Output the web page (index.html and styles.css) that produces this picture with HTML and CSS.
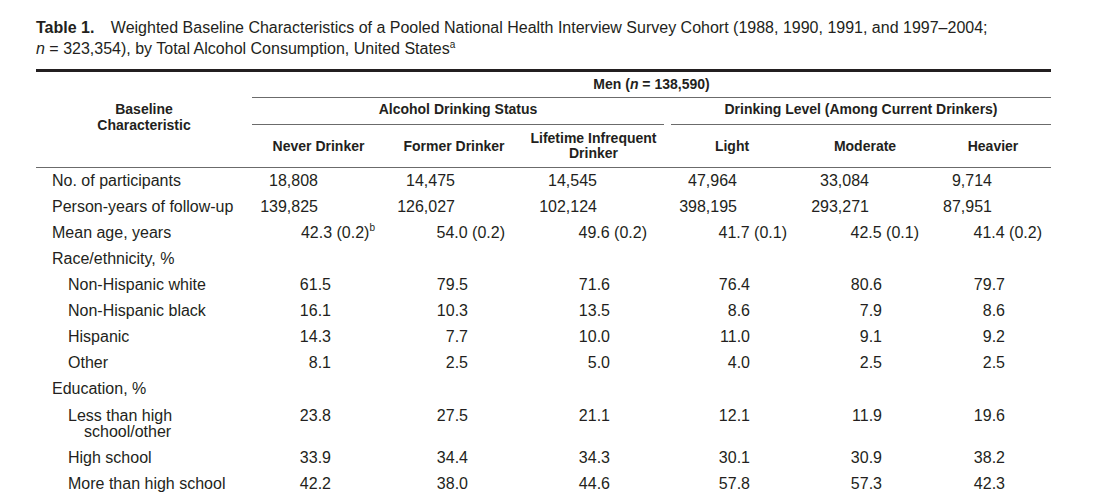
FILE: index.html
```html
<!DOCTYPE html>
<html lang="en">
<head>
<meta charset="utf-8">
<title>Table 1</title>
<link rel="stylesheet" href="styles.css">
</head>
<body>
<div class="page">
  <p class="caption"><b class="label">Table 1.</b> Weighted Baseline Characteristics of a Pooled National Health Interview Survey Cohort (1988, 1990, 1991, and 1997–2004;<br><i>n</i> = 323,354), by Total Alcohol Consumption, United States<sup>a</sup></p>
  <table class="tbl">
    <colgroup>
      <col class="c0"><col class="c1"><col class="c2"><col class="c3"><col class="c4"><col class="c5"><col class="c6">
    </colgroup>
    <thead>
      <tr>
        <th rowspan="3" class="h-base">Baseline<br>Characteristic</th>
        <th colspan="6" class="h-men">Men (<i>n</i> = 138,590)</th>
      </tr>
      <tr>
        <th colspan="3" class="h-grp"><div class="grp">Alcohol Drinking Status</div></th>
        <th colspan="3" class="h-grp"><div class="grp grp-r">Drinking Level (Among Current Drinkers)</div></th>
      </tr>
      <tr class="h-cols">
        <th>Never Drinker</th>
        <th>Former Drinker</th>
        <th>Lifetime Infrequent<br>Drinker</th>
        <th>Light</th>
        <th>Moderate</th>
        <th class="last">Heavier</th>
      </tr>
    </thead>
    <tbody>
      <tr class="r-count">
        <td class="lbl">No. of participants</td>
        <td><div class="v">18,808</div></td><td><div class="v">14,475</div></td><td><div class="v">14,545</div></td><td><div class="v">47,964</div></td><td><div class="v">33,084</div></td><td><div class="v">9,714</div></td>
      </tr>
      <tr class="r-count">
        <td class="lbl">Person-years of follow-up</td>
        <td><div class="v">139,825</div></td><td><div class="v">126,027</div></td><td><div class="v">102,124</div></td><td><div class="v">398,195</div></td><td><div class="v">293,271</div></td><td><div class="v">87,951</div></td>
      </tr>
      <tr class="r-mean">
        <td class="lbl">Mean age, years</td>
        <td><div class="v">42.3 (0.2)<sup>b</sup></div></td><td><div class="v">54.0 (0.2)</div></td><td><div class="v">49.6 (0.2)</div></td><td><div class="v">41.7 (0.1)</div></td><td><div class="v">42.5 (0.1)</div></td><td><div class="v">41.4 (0.2)</div></td>
      </tr>
      <tr>
        <td class="lbl" colspan="7">Race/ethnicity, %</td>
      </tr>
      <tr class="r-pct">
        <td class="sub">Non-Hispanic white</td>
        <td><div class="v">61.5</div></td><td><div class="v">79.5</div></td><td><div class="v">71.6</div></td><td><div class="v">76.4</div></td><td><div class="v">80.6</div></td><td><div class="v">79.7</div></td>
      </tr>
      <tr class="r-pct">
        <td class="sub">Non-Hispanic black</td>
        <td><div class="v">16.1</div></td><td><div class="v">10.3</div></td><td><div class="v">13.5</div></td><td><div class="v">8.6</div></td><td><div class="v">7.9</div></td><td><div class="v">8.6</div></td>
      </tr>
      <tr class="r-pct">
        <td class="sub">Hispanic</td>
        <td><div class="v">14.3</div></td><td><div class="v">7.7</div></td><td><div class="v">10.0</div></td><td><div class="v">11.0</div></td><td><div class="v">9.1</div></td><td><div class="v">9.2</div></td>
      </tr>
      <tr class="r-pct">
        <td class="sub">Other</td>
        <td><div class="v">8.1</div></td><td><div class="v">2.5</div></td><td><div class="v">5.0</div></td><td><div class="v">4.0</div></td><td><div class="v">2.5</div></td><td><div class="v">2.5</div></td>
      </tr>
      <tr>
        <td class="lbl" colspan="7">Education, %</td>
      </tr>
      <tr class="r-pct r-tall">
        <td class="sub">Less than high<br>school/other</td>
        <td><div class="v">23.8</div></td><td><div class="v">27.5</div></td><td><div class="v">21.1</div></td><td><div class="v">12.1</div></td><td><div class="v">11.9</div></td><td><div class="v">19.6</div></td>
      </tr>
      <tr class="r-pct">
        <td class="sub">High school</td>
        <td><div class="v">33.9</div></td><td><div class="v">34.4</div></td><td><div class="v">34.3</div></td><td><div class="v">30.1</div></td><td><div class="v">30.9</div></td><td><div class="v">38.2</div></td>
      </tr>
      <tr class="r-pct">
        <td class="sub">More than high school</td>
        <td><div class="v">42.2</div></td><td><div class="v">38.0</div></td><td><div class="v">44.6</div></td><td><div class="v">57.8</div></td><td><div class="v">57.3</div></td><td><div class="v">42.3</div></td>
      </tr>
    </tbody>
  </table>
</div>
</body>
</html>
```
FILE: styles.css
```css
html, body {
  margin: 0;
  background: #ffffff;
}

body {
  color: #231f20;
  font-family: "Liberation Sans", Arial, sans-serif;
}

.page {
  width: 1015px;
  padding: 17px 0 0 36px;
}

.caption {
  margin: 0 0 10px;
  font-size: 16px;
  line-height: 21px;
}

.caption .label {
  margin-right: 12px;
}

.caption sup {
  font-size: 10px;
  line-height: 0;
  vertical-align: 6px;
}

.tbl {
  width: 1015px;
  table-layout: fixed;
  border-collapse: separate;
  border-spacing: 0;
  border-top: 3px solid #231f20;
}

.c0 { width: 216px; }
.c1 { width: 133px; }
.c2 { width: 138px; }
.c3 { width: 141px; }
.c4 { width: 136px; }
.c5 { width: 130px; }
.c6 { width: 121px; }

.tbl th {
  padding: 0;
  font-size: 14px;
  font-weight: bold;
  text-align: center;
}

.h-base {
  vertical-align: middle;
  line-height: 16px;
  padding-bottom: 5px !important;
}

.h-men {
  height: 25px;
  line-height: 25px;
  vertical-align: middle;
  border-bottom: 1px solid #6b6b6b;
}

.h-grp {
  vertical-align: top;
}

.grp {
  line-height: 23px;
  padding-bottom: 3px;
  border-bottom: 1px solid #6b6b6b;
}

.grp-r {
  margin-left: 7px;
}

.h-cols th {
  height: 42px;
  line-height: 15px;
  vertical-align: middle;
}

.h-cols th.last {
  padding-left: 5px;
}

.tbl td {
  padding: 5px 0;
  font-size: 16px;
  line-height: 16px;
  vertical-align: top;
}

.tbl tbody tr:first-child td {
  border-top: 1px solid #6b6b6b;
  padding-top: 5px;
}

.tbl tr.r-tall td {
  padding-top: 6px;
}

.tbl td.lbl {
  padding-left: 16px;
}

.tbl td.sub {
  padding-left: 48px;
  text-indent: -16px;
}

.tbl td:nth-child(2) { --s: -0.5px; }
.tbl td:nth-child(3) { --s: 1px; }
.tbl td:nth-child(4) { --s: 3.5px; }
.tbl td:nth-child(5) { --s: 5px; }
.tbl td:nth-child(6) { --s: 4px; }
.tbl td:nth-child(7) { --s: 1.5px; }

.r-count { --o: 0px; }
.r-mean { --o: 50px; }
.r-pct { --o: 13px; }

.v {
  width: calc(50% + var(--s, 0px) + var(--o, 0px));
  text-align: right;
  white-space: nowrap;
}

.v sup {
  font-size: 10px;
  line-height: 0;
  vertical-align: 7px;
  margin-right: -7px;
}
```
